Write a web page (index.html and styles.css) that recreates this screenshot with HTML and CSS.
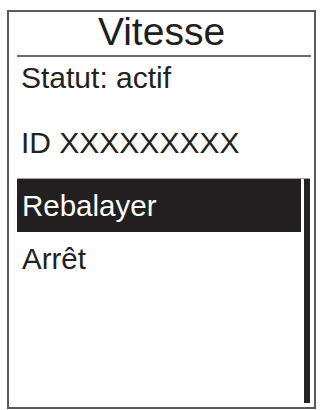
FILE: index.html
```html
<!DOCTYPE html>
<html lang="fr">
<head>
<meta charset="utf-8">
<title>Vitesse</title>
<link rel="stylesheet" href="styles.css">
</head>
<body>
<div class="screen">
  <div class="title">Vitesse</div>
  <div class="sep"></div>
  <div class="info">
    <div class="row">Statut: actif</div>
    <div class="row row-id">ID XXXXXXXXX</div>
  </div>
  <div class="menu">
    <ul class="list">
      <li class="item selected">Rebalayer</li>
      <li class="item">Arrêt</li>
    </ul>
    <div class="scrollbar"></div>
  </div>
</div>
</body>
</html>
```

FILE: styles.css
```css
html, body {
  margin: 0;
  padding: 0;
  background: #ffffff;
}
body {
  padding: 10px 4px 1px 7px;
  font-family: "Liberation Sans", Arial, Helvetica, sans-serif;
  color: #222222;
}
.screen {
  box-sizing: border-box;
  width: 309px;
  height: 399px;
  border: 2px solid #5a5a5a;
  display: flex;
  flex-direction: column;
}
.title {
  height: 43px;
  line-height: 40px;
  font-size: 39px;
  text-align: center;
  color: #1e1e1e;
}
.sep {
  height: 2px;
  margin: 0 3px 0 8px;
  background: #6a6a6a;
}
.info {
  padding-left: 12px;
}
.row {
  font-size: 30px;
  line-height: 42px;
  white-space: nowrap;
}
.row-id {
  margin-top: 23px;
}
.menu {
  margin: 14px 4px 0 8px;
  border-top: 1px solid #a0a0a0;
  height: 225px;
  display: flex;
  gap: 3px;
}
.list {
  list-style: none;
  margin: 0;
  padding: 0;
  flex: 1;
}
.item {
  height: 53px;
  line-height: 53px;
  font-size: 29.5px;
  padding-left: 5px;
  white-space: nowrap;
}
.item.selected {
  background: #231f20;
  color: #ffffff;
}
.scrollbar {
  width: 6px;
  background: #222222;
  margin-bottom: 1px;
}
```
